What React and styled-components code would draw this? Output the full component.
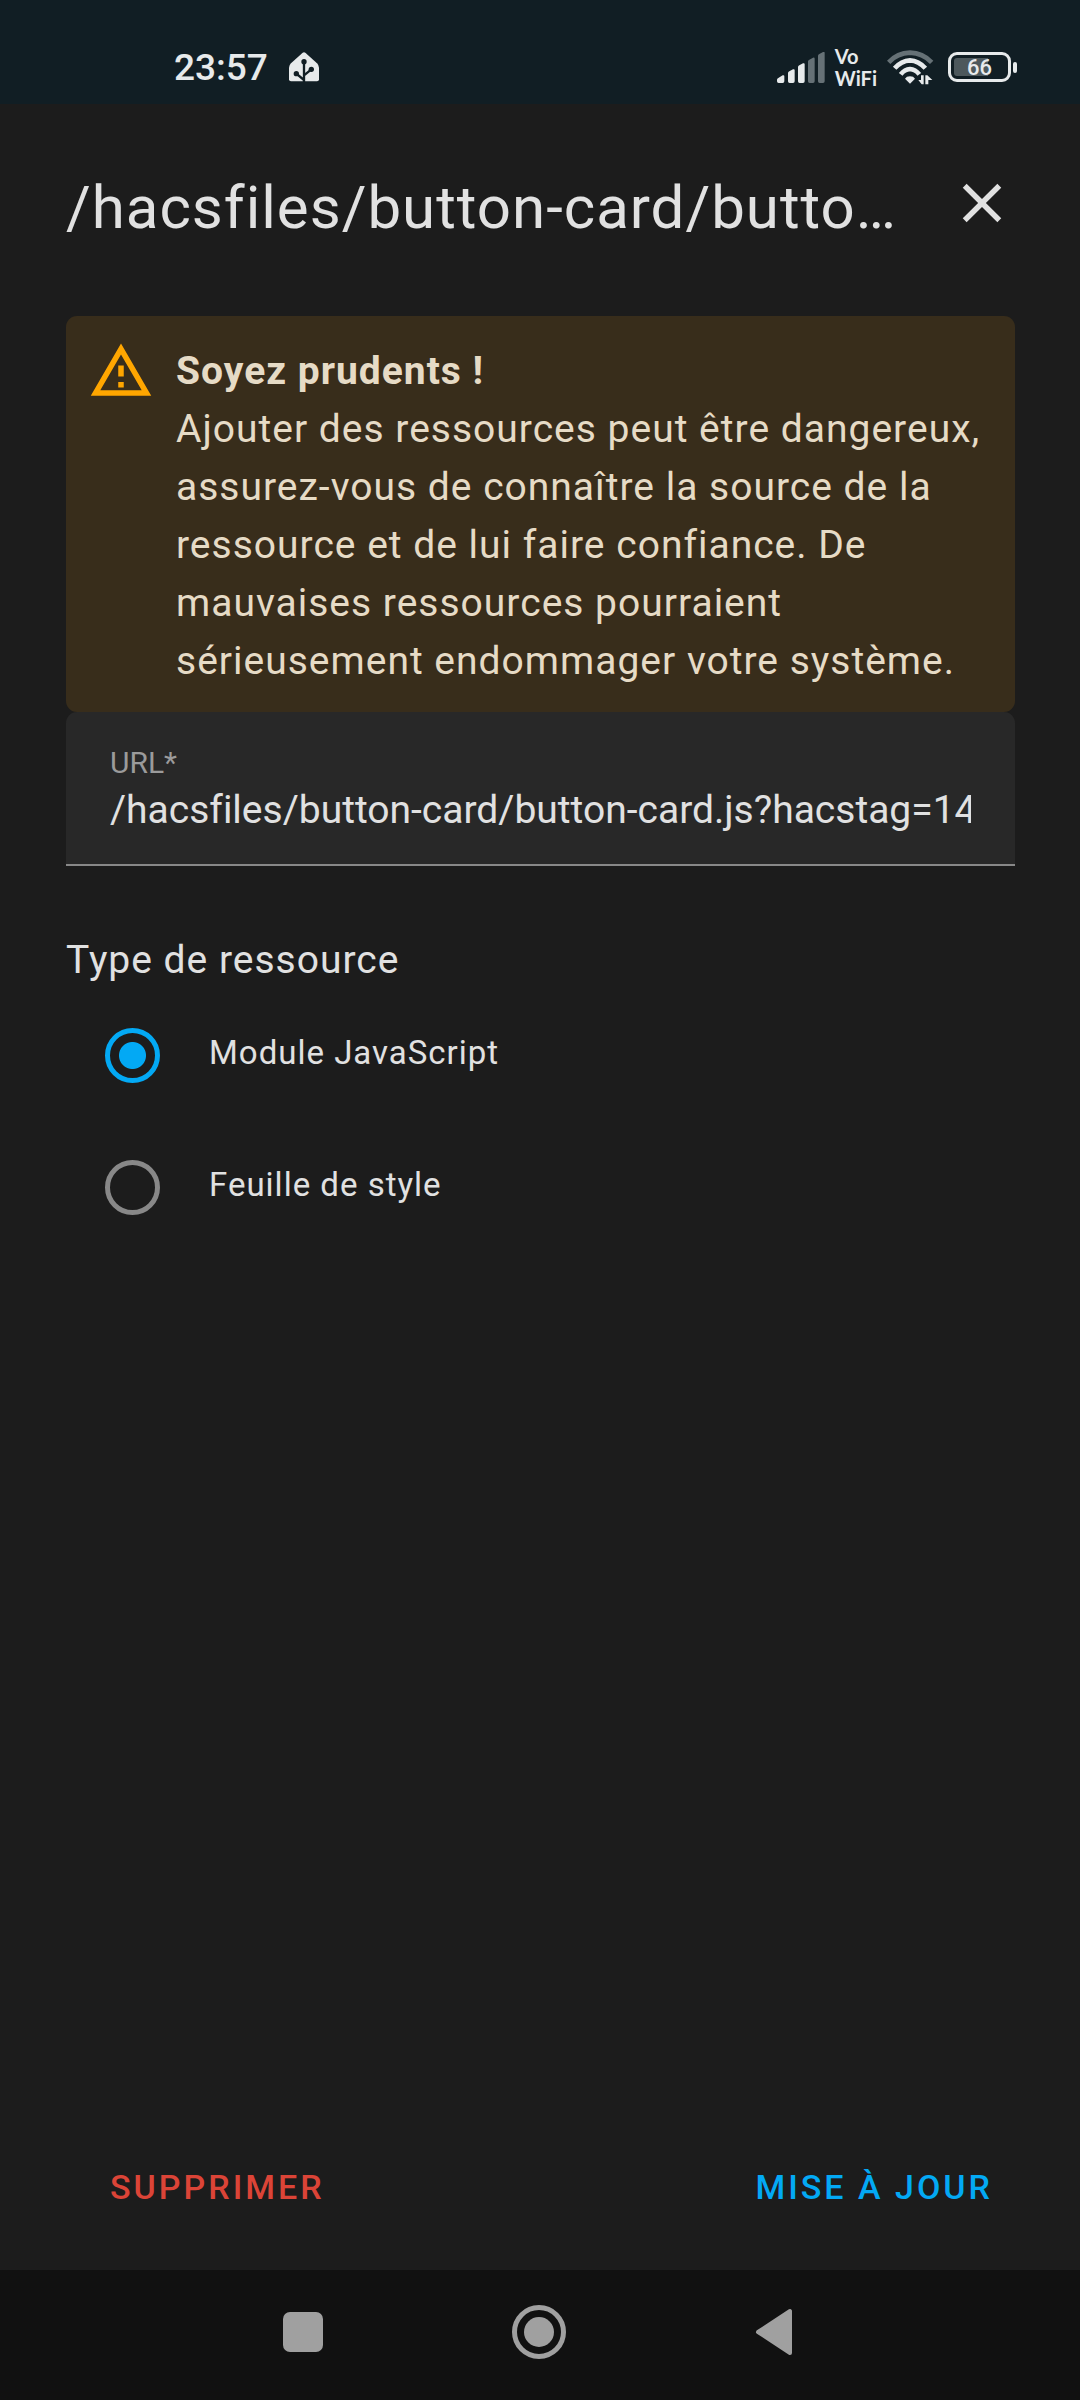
import React, { useState } from "react";
import styled, { createGlobalStyle } from "styled-components";

const GlobalStyle = createGlobalStyle`
  * {
    box-sizing: border-box;
  }
  body {
    margin: 0;
    background: #1c1c1c;
    color: #e1e1e1;
    font-family: Roboto, "Noto Sans", sans-serif;
    font-size: 39px;
    line-height: 58px;
    letter-spacing: 1px;
  }
  button,
  input {
    font-family: inherit;
  }
`;

const resourceTypes = [
  { value: "module", label: "Module JavaScript" },
  { value: "css", label: "Feuille de style" },
];

const StatusBar = () => (
  <Status>
    <StatusGroup>
      <Clock>23:57</Clock>
      <svg width="30" height="30" viewBox="0 0 90 90">
        <path d="M41 2Q45 -1 49 2L84 34Q90 40 90 47V82Q90 88 84 88H6Q0 88 0 82V47Q0 40 6 34Z" fill="#e7eaeb" />
        <g stroke="#111e24" strokeWidth="7" fill="none">
          <path d="M45 28V90M22 65L45 84M67 52L45 70" />
        </g>
        <g fill="#111e24">
          <circle cx="45" cy="29" r="8" />
          <circle cx="22" cy="65" r="8" />
          <circle cx="67" cy="52" r="8" />
        </g>
      </svg>
    </StatusGroup>
    <StatusGroup>
      <svg width="48" height="31" viewBox="0 0 144 93">
        <g fill="#e7eaeb">
          <path d="M0 88V83Q0 80 4 78L17 70Q22 68 22 73V88Q22 93 17 93H5Q0 93 0 88Z" />
          <path d="M33 88V63Q33 60 37 58L48 52Q53 50 53 55V88Q53 93 48 93H38Q33 93 33 88Z" />
          <path d="M63 88V45Q63 42 67 40L78 34Q83 32 83 37V88Q83 93 78 93H68Q63 93 63 88Z" />
        </g>
        <g fill="#667176">
          <path d="M93 88V28Q93 25 97 23L108 17Q113 15 113 20V88Q113 93 108 93H98Q93 93 93 88Z" />
          <path d="M123 88V11Q123 8 127 6L138 0Q143 -2 143 3V88Q143 93 138 93H128Q123 93 123 88Z" />
        </g>
      </svg>
      <Carrier>
        <span>Vo</span>
        <span>WiFi</span>
      </Carrier>
      <svg width="47" height="35" viewBox="0 0 141 105">
        <g fill="none" strokeWidth="14">
          <path d="M5 37Q31 9 69 8Q107 9 134 37" stroke="#667176" />
          <path d="M23 55Q43 32 69 31Q95 32 115 55" stroke="#e7eaeb" />
          <path d="M41 73Q53 58 69 57Q85 58 97 73" stroke="#e7eaeb" />
        </g>
        <path d="M69 79Q80 79 84 86L69 101L54 86Q58 79 69 79Z" fill="#e7eaeb" />
        <path d="M102 76H110V103H104L94 90H102ZM115 103V76H121L136 90H124V103Z" fill="#e7eaeb" />
      </svg>
      <BatteryWrap>
        <Battery>66</Battery>
        <BatteryTip />
      </BatteryWrap>
    </StatusGroup>
  </Status>
);

const NavBar = () => (
  <Nav>
    <NavButton aria-label="Applications récentes">
      <svg width="56" height="56" viewBox="0 0 56 56">
        <rect x="8" y="8" width="40" height="40" rx="7" fill="#a0a0a0" />
      </svg>
    </NavButton>
    <NavButton aria-label="Accueil">
      <svg width="56" height="56" viewBox="0 0 56 56">
        <circle cx="28" cy="28" r="24.5" fill="none" stroke="#a0a0a0" strokeWidth="5" />
        <circle cx="28" cy="28" r="15" fill="#a0a0a0" />
      </svg>
    </NavButton>
    <NavButton aria-label="Retour">
      <svg width="56" height="56" viewBox="0 0 56 56">
        <path d="M11 28L43 7V49Z" fill="#a0a0a0" stroke="#a0a0a0" strokeWidth="4" strokeLinejoin="round" />
      </svg>
    </NavButton>
  </Nav>
);

const App = () => {
  const [url, setUrl] = useState("/hacsfiles/button-card/button-card.js?hacstag=146194325");
  const [type, setType] = useState("module");

  return (
    <Page>
      <GlobalStyle />
      <StatusBar />
      <Header>
        <Title>{url}</Title>
        <CloseButton aria-label="Fermer">
          <svg width="66" height="66" viewBox="0 0 24 24">
            <path
              d="M19,6.41L17.59,5L12,10.59L6.41,5L5,6.41L10.59,12L5,17.59L6.41,19L12,13.41L17.59,19L19,17.59L13.41,12L19,6.41Z"
              fill="currentColor"
            />
          </svg>
        </CloseButton>
      </Header>
      <Content>
        <Alert role="alert">
          <AlertIcon viewBox="0 0 24 24">
            <path d="M12,2L1,21H23M12,6L19.53,19H4.47M11,10V14H13V10M11,16V18H13V16" fill="currentColor" />
          </AlertIcon>
          <AlertBody>
            <AlertTitle>Soyez prudents !</AlertTitle>
            Ajouter des ressources peut être dangereux, assurez-vous de connaître la source de la ressource et de lui
            faire confiance. De mauvaises ressources pourraient sérieusement endommager votre système.
          </AlertBody>
        </Alert>
        <Field>
          <FieldLabel htmlFor="url">URL*</FieldLabel>
          <FieldInput id="url" type="text" value={url} onChange={(e) => setUrl(e.target.value)} />
        </Field>
        <Group>
          <Legend>Type de ressource</Legend>
          {resourceTypes.map((item) => (
            <Option key={item.value}>
              <Radio
                type="radio"
                name="type"
                value={item.value}
                checked={type === item.value}
                onChange={() => setType(item.value)}
              />
              <OptionText>{item.label}</OptionText>
            </Option>
          ))}
        </Group>
      </Content>
      <Footer>
        <Action $color="#db4437">Supprimer</Action>
        <Action $color="#03a9f4">Mise à jour</Action>
      </Footer>
      <NavBar />
    </Page>
  );
};

export default App;

const Page = styled.div`
  display: flex;
  flex-direction: column;
  min-height: 100vh;
`;

const Status = styled.div`
  display: flex;
  align-items: center;
  justify-content: space-between;
  height: 104px;
  padding: 30px 63px 0 174px;
  background: #111e24;
  color: #e7eaeb;
`;

const StatusGroup = styled.div`
  display: flex;
  align-items: center;
  gap: 10px;
`;

const Clock = styled.span`
  margin-right: 11px;
  padding-top: 2px;
  font-size: 37px;
  font-weight: 500;
  line-height: 44px;
  letter-spacing: 0;
`;

const Carrier = styled.span`
  display: flex;
  flex-direction: column;
  font-family: Lato, sans-serif;
  font-size: 20px;
  font-weight: 700;
  line-height: 22px;
  letter-spacing: 0;
`;

const BatteryWrap = styled.div`
  display: flex;
  align-items: center;
  gap: 2px;
  margin-left: 4px;
`;

const Battery = styled.div`
  width: 63px;
  height: 30px;
  padding: 3px;
  border: 3px solid #e7eaeb;
  border-radius: 9px;
  background: linear-gradient(90deg, #4d585c 66%, transparent 66%) content-box;
  font-size: 22px;
  font-weight: 500;
  line-height: 19px;
  letter-spacing: 0;
  text-align: center;
`;

const BatteryTip = styled.div`
  width: 4px;
  height: 11px;
  border-radius: 2px;
  background: #e7eaeb;
`;

const Header = styled.header`
  display: flex;
  align-items: flex-start;
  padding: 33px 32px 37px 66px;
`;

const Title = styled.h1`
  flex: 1;
  min-width: 0;
  margin: 0;
  overflow: hidden;
  font-size: 60px;
  font-weight: 400;
  line-height: 142px;
  text-overflow: ellipsis;
  white-space: nowrap;
`;

const CloseButton = styled.button`
  display: flex;
  align-items: center;
  justify-content: center;
  width: 132px;
  height: 132px;
  padding: 0;
  border: none;
  background: none;
  color: #e1e1e1;
`;

const Content = styled.main`
  flex: 1;
  padding: 0 65px 0 66px;
`;

const Alert = styled.div`
  display: flex;
  gap: 22px;
  padding: 22px;
  border-radius: 11px;
  background: #382d1b;
  color: #e6dbc6;
`;

const AlertIcon = styled.svg`
  flex: none;
  width: 66px;
  height: 66px;
  color: #ffa600;
`;

const AlertBody = styled.div`
  padding-top: 4px;
`;

const AlertTitle = styled.div`
  font-weight: 700;
`;

const Field = styled.div`
  display: flex;
  flex-direction: column;
  padding: 31px 44px 28px;
  border-bottom: 2px solid #888888;
  border-radius: 11px 11px 0 0;
  background: #282828;
`;

const FieldLabel = styled.label`
  color: #9b9b9b;
  font-size: 30px;
  line-height: 40px;
  letter-spacing: 0;
`;

const FieldInput = styled.input`
  width: 100%;
  height: 53px;
  padding: 0;
  border: none;
  outline: none;
  background: none;
  color: #e1e1e1;
  font-size: 39px;
  font-variant-ligatures: none;
  letter-spacing: 0;
`;

const Group = styled.fieldset`
  margin: 65px 0 0;
  padding: 0;
  border: none;
`;

const Legend = styled.legend`
  padding: 0;
`;

const Option = styled.label`
  display: flex;
  align-items: center;
  gap: 49px;
  height: 132px;
  padding-left: 39px;
`;

const Radio = styled.input`
  flex: none;
  appearance: none;
  width: 55px;
  height: 55px;
  margin: 0;
  border: 5px solid #888888;
  border-radius: 50%;

  &:checked {
    border-color: #03a9f4;
    background: radial-gradient(circle, #03a9f4 13px, transparent 14px);
  }
`;

const OptionText = styled.span`
  padding-bottom: 4px;
  font-size: 33px;
`;

const Footer = styled.footer`
  display: flex;
  justify-content: space-between;
  padding: 22px 65px 34px 88px;
`;

const Action = styled.button`
  height: 99px;
  padding: 0 22px;
  border: none;
  background: none;
  color: ${(props) => props.$color};
  font-size: 34px;
  font-weight: 500;
  letter-spacing: 3px;
  text-transform: uppercase;
`;

const Nav = styled.nav`
  display: flex;
  justify-content: center;
  height: 130px;
  padding: 0 2px 6px 0;
  background: #111111;
`;

const NavButton = styled.button`
  display: flex;
  align-items: center;
  justify-content: center;
  width: 22%;
  max-width: 236px;
  padding: 0;
  border: none;
  background: none;
`;
